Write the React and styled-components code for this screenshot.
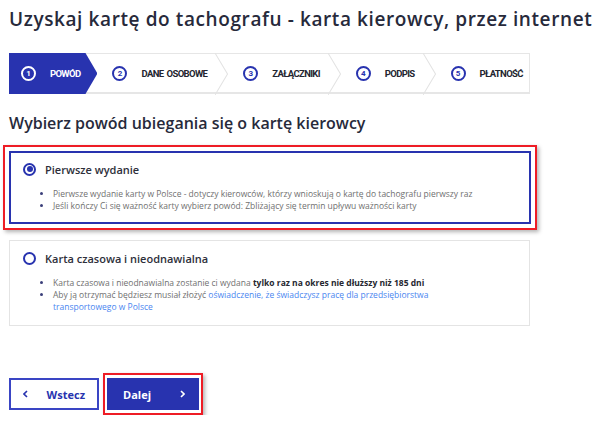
import React from "react";
import styled, { createGlobalStyle } from "styled-components";

const BLUE = "#2833af";

const GlobalStyle = createGlobalStyle`
  body {
    margin: 0;
    background: #fff;
    font-family: "Open Sans", "Noto Sans", sans-serif;
    color: #2a2c3a;
  }
`;

const steps = ["POWÓD", "DANE OSOBOWE", "ZAŁĄCZNIKI", "PODPIS", "PŁATNOŚĆ"];

const Chevron = ({ dir = "right" }) => (
  <svg width="5" height="8" viewBox="0 0 5 8">
    <path
      d={dir === "right" ? "M1 1l3 3-3 3" : "M4 1L1 4l3 3"}
      fill="none"
      stroke="currentColor"
      strokeWidth="1.6"
    />
  </svg>
);

const App = () => {
  return (
    <Page>
      <GlobalStyle />
      <Title>Uzyskaj kartę do tachografu - karta kierowcy, przez internet</Title>

      <Stepper>
        {steps.map((label, i) => (
          <Step key={label} $active={i === 0} $first={i === 0} $last={i === steps.length - 1}>
            <StepNum $active={i === 0}>{i + 1}</StepNum>
            <StepLabel $active={i === 0}>{label}</StepLabel>
            {i > 0 && i < steps.length - 1 && (
              <Separator viewBox="0 0 13 40" preserveAspectRatio="none">
                <polyline points="0,0 12.5,20 0,40" fill="none" stroke="#e3e3e3" strokeWidth="1" />
              </Separator>
            )}
          </Step>
        ))}
      </Stepper>

      <Subtitle>Wybierz powód ubiegania się o kartę kierowcy</Subtitle>

      <Highlight $wide>
        <Option $selected>
          <OptionHead>
            <Radio $selected />
            <OptionTitle>Pierwsze wydanie</OptionTitle>
          </OptionHead>
          <Bullets>
            <li>
              Pierwsze wydanie karty w Polsce - dotyczy kierowców, którzy wnioskują o kartę do
              tachografu pierwszy raz
            </li>
            <li>
              Jeśli kończy Ci się ważność karty wybierz powód: Zbliżający się termin upływu ważności
              karty
            </li>
          </Bullets>
        </Option>
      </Highlight>

      <Option>
        <OptionHead>
          <Radio />
          <OptionTitle>Karta czasowa i nieodnawialna</OptionTitle>
        </OptionHead>
        <Bullets>
          <li>
            Karta czasowa i nieodnawialna zostanie ci wydana{" "}
            <Strong>tylko raz na okres nie dłuższy niż 185 dni</Strong>
          </li>
          <li>
            Aby ją otrzymać będziesz musiał złożyć{" "}
            <Link href="#">
              oświadczenie, że świadczysz pracę dla przedsiębiorstwa transportowego w Polsce
            </Link>
          </li>
        </Bullets>
      </Option>

      <Actions>
        <Button>
          <Chevron dir="left" />
          <span>Wstecz</span>
        </Button>
        <Highlight>
          <Button $primary>
            <span>Dalej</span>
            <Chevron dir="right" />
          </Button>
        </Highlight>
      </Actions>
    </Page>
  );
};

export default App;

// =========== Styled Components ===========

const Page = styled.div`
  width: 521px;
  padding: 7px 0 0 9px;
`;

const Title = styled.h1`
  margin: 0;
  font-size: 19px;
  line-height: 25px;
  font-weight: 600;
  letter-spacing: 0.6px;
  color: #272a3b;
  white-space: nowrap;
`;

const Stepper = styled.div`
  margin-top: 21px;
  height: 41px;
  box-sizing: border-box;
  display: flex;
  border: 1px solid #e6e6e6;
  border-bottom-width: 2px;
  border-left: none;
  background: #fff;
`;

const Step = styled.div`
  display: flex;
  align-items: center;
  padding-left: ${(p) => (p.$first ? "12px" : "15px")};
  padding-right: ${(p) => (p.$active ? "17px" : "0")};
  margin-top: -1px;
  margin-bottom: -2px;
  flex: ${(p) => (p.$last ? 1 : "none")};
  min-width: 0;
  background: ${(p) => (p.$active ? BLUE : "transparent")};
  clip-path: ${(p) =>
    p.$active
      ? "polygon(0 0, calc(100% - 12px) 0, 100% 50%, calc(100% - 12px) 100%, 0 100%)"
      : "none"};
`;

const StepNum = styled.span`
  width: 15px;
  height: 15px;
  flex: none;
  box-sizing: border-box;
  border: 2px solid ${(p) => (p.$active ? "#fff" : BLUE)};
  border-radius: 50%;
  display: flex;
  align-items: center;
  justify-content: center;
  font-family: "Roboto", sans-serif;
  font-size: 8px;
  font-weight: 700;
  color: ${(p) => (p.$active ? "#fff" : BLUE)};
  margin-right: 14px;
`;

const StepLabel = styled.span`
  font-family: "Roboto", sans-serif;
  font-size: 9.5px;
  font-weight: 700;
  letter-spacing: -0.65px;
  word-spacing: 1.5px;
  white-space: nowrap;
  color: ${(p) => (p.$active ? "#fff" : "#23252f")};
`;

const Separator = styled.svg`
  width: 13px;
  height: 42px;
  margin-left: 8px;
  flex: none;
`;

const Subtitle = styled.h2`
  margin: 18px 0 0;
  font-size: 16px;
  line-height: 22px;
  font-weight: 600;
  color: #272a3b;
`;

const Highlight = styled.div`
  border: 2px solid #ee1c25;
  padding: ${(p) => (p.$wide ? "4px" : "3px 2px")};
  margin: ${(p) => (p.$wide ? "11px -7px 0 -6px" : "0")};
  box-shadow: 2px 2px 4px rgba(0, 0, 0, 0.3);
`;

const Option = styled.div`
  box-sizing: border-box;
  border: ${(p) => (p.$selected ? `2px solid ${BLUE}` : "1px solid #e4e4e4")};
  padding: ${(p) => (p.$selected ? "9px 16px 10px 12px" : "10px 17px 12px 13px")};
  margin-top: ${(p) => (p.$selected ? "0" : "10px")};
  background: #fff;
`;

const OptionHead = styled.div`
  display: flex;
  align-items: center;
  gap: 9px;
  height: 14px;
`;

const Radio = styled.span`
  width: 13px;
  height: 13px;
  box-sizing: border-box;
  border-radius: 50%;
  border: 2px solid ${BLUE};
  display: flex;
  align-items: center;
  justify-content: center;
  &::after {
    content: "";
    display: ${(p) => (p.$selected ? "block" : "none")};
    width: 6px;
    height: 6px;
    border-radius: 50%;
    background: ${BLUE};
  }
`;

const OptionTitle = styled.span`
  font-size: 11px;
  font-weight: 600;
  color: #2e2f3a;
`;

const Bullets = styled.ul`
  margin: 12px 0 0;
  padding-left: 30px;
  max-width: 430px;
  font-size: 8.5px;
  line-height: 12px;
  color: #707070;
  li::marker {
    color: #3b3f7a;
  }
`;

const Strong = styled.b`
  font-weight: 700;
  color: #26272f;
`;

const Link = styled.a`
  color: #4a86f0;
  text-decoration: none;
`;

const Actions = styled.div`
  margin-top: 47px;
  display: flex;
  align-items: center;
  gap: 4px;
`;

const Button = styled.button`
  box-sizing: border-box;
  width: ${(p) => (p.$primary ? "92px" : "90px")};
  height: 32px;
  display: flex;
  align-items: center;
  justify-content: space-between;
  padding: 0 12px 0 ${(p) => (p.$primary ? "14px" : "12px")};
  border: 2px solid ${(p) => (p.$primary ? BLUE : "#3a45c4")};
  background: ${(p) => (p.$primary ? BLUE : "#fff")};
  color: ${(p) => (p.$primary ? "#fff" : BLUE)};
  font-family: "Open Sans", sans-serif;
  font-size: 11px;
  font-weight: 700;
  cursor: pointer;
`;
